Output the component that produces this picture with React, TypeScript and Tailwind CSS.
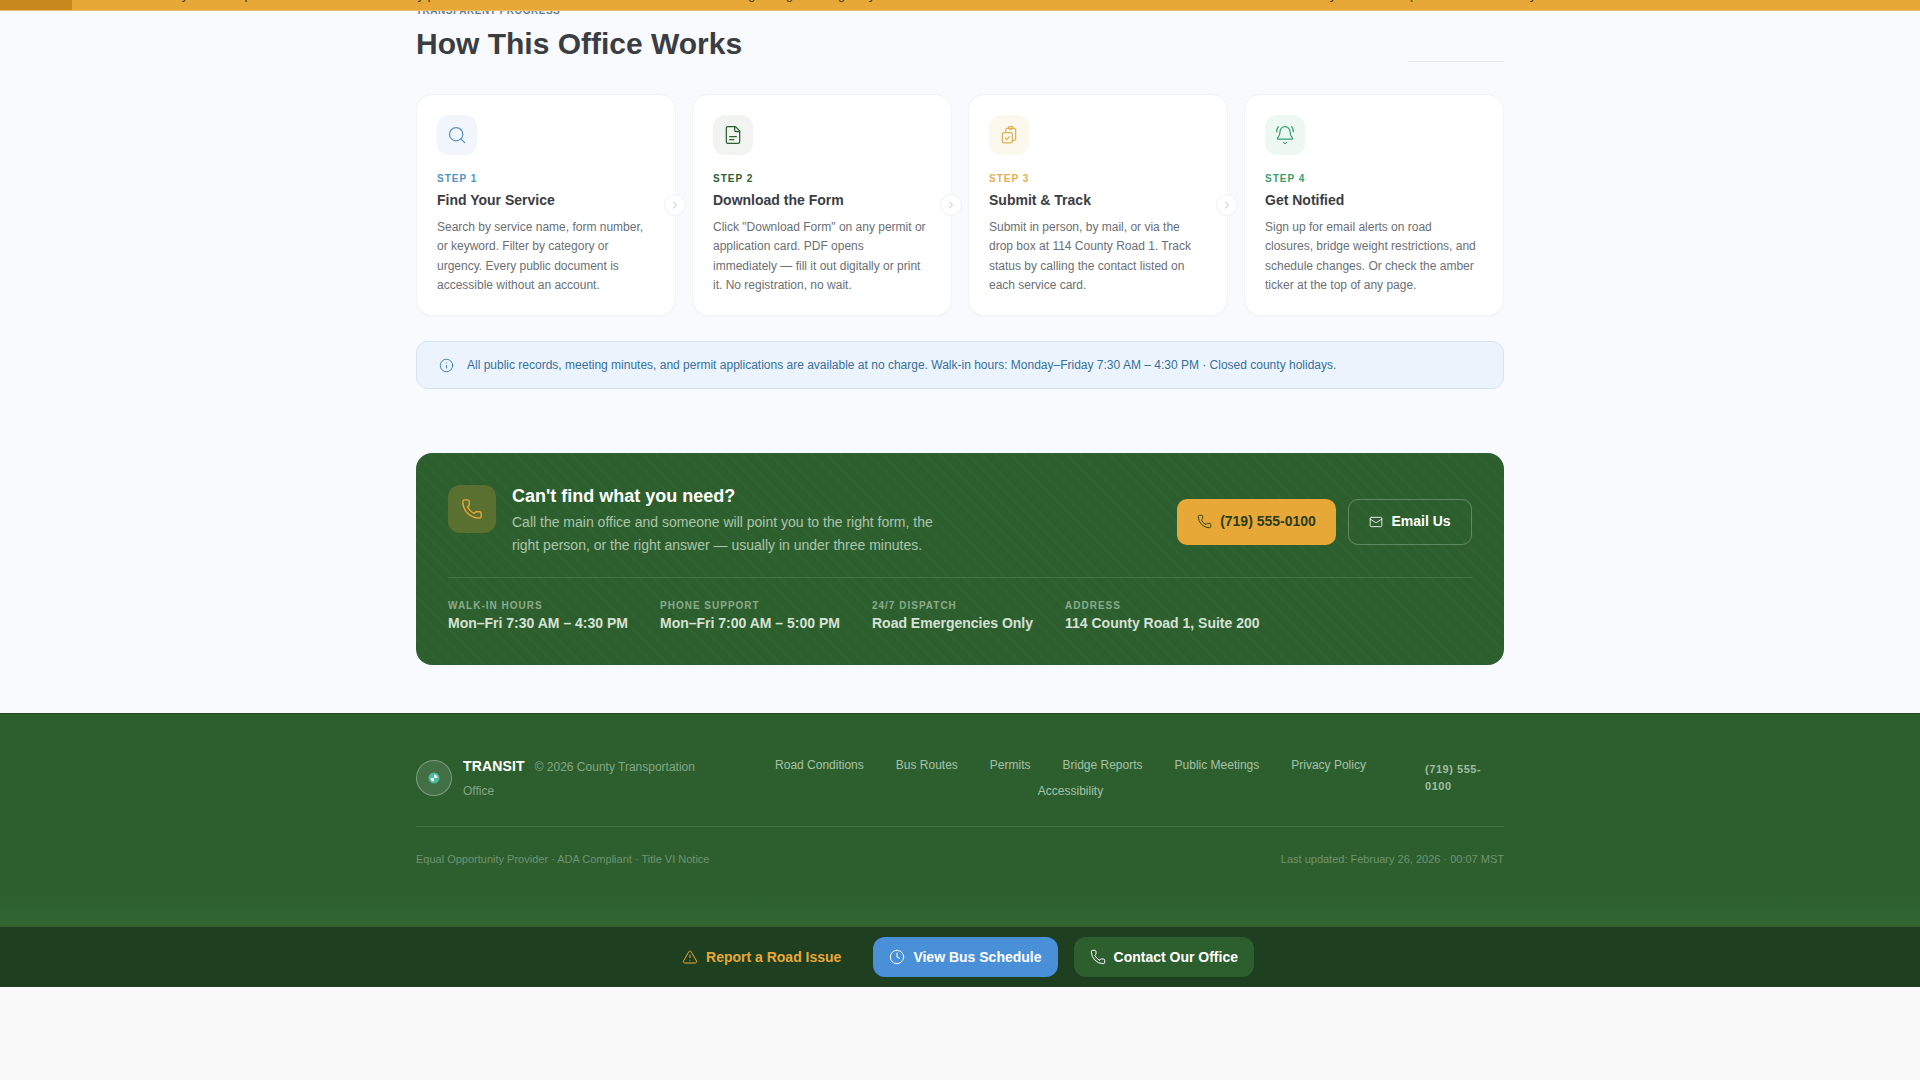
import { Search, BellRing, ChevronRight, Info, Phone, Mail, TriangleAlert, Clock } from "lucide-react";
import type { SVGProps } from "react";

type IconProps = SVGProps<SVGSVGElement> & { size?: number; strokeWidth?: number };

function Clipboards(props: IconProps) {
  const { size = 20, strokeWidth = 1.5, ...rest } = props;
  return (
    <svg width={size} height={size} viewBox="0 0 24 24" fill="none" stroke="currentColor" strokeWidth={strokeWidth} strokeLinecap="round" strokeLinejoin="round" {...rest}>
      <rect x="4" y="9" width="12" height="12.5" rx="2" />
      <path d="M8 9V6a2 2 0 0 1 2-2h8a2 2 0 0 1 2 2v10.5a2 2 0 0 1-2 2h-2" />
      <rect x="11.5" y="2" width="5" height="3" rx="1" />
      <path d="M7.5 15.5l2 2 3-3.5" />
    </svg>
  );
}

function DocLines(props: IconProps) {
  const { size = 20, strokeWidth = 1.5, ...rest } = props;
  return (
    <svg width={size} height={size} viewBox="0 0 24 24" fill="none" stroke="currentColor" strokeWidth={strokeWidth} strokeLinecap="round" strokeLinejoin="round" {...rest}>
      <path d="M15 2H6a2 2 0 0 0-2 2v16a2 2 0 0 0 2 2h12a2 2 0 0 0 2-2V7z" />
      <path d="M14 2v4a2 2 0 0 0 2 2h4" />
      <path d="M8 14h8" />
      <path d="M8 17.5h5" />
    </svg>
  );
}

const steps = [
  { n: "STEP 1", t: "Find Your Service", d: "Search by service name, form number, or keyword. Filter by category or urgency. Every public document is accessible without an account.", Icon: Search, box: "bg-[#f0f6fc]", ic: "text-[#5b93c7]", st: "text-[#4f94c4]" },
  { n: "STEP 2", t: "Download the Form", d: "Click \"Download Form\" on any permit or application card. PDF opens immediately — fill it out digitally or print it. No registration, no wait.", Icon: DocLines, box: "bg-[#f1f4f1]", ic: "text-[#2d5f2e]", st: "text-[#2d5f2e]" },
  { n: "STEP 3", t: "Submit & Track", d: "Submit in person, by mail, or via the drop box at 114 County Road 1. Track status by calling the contact listed on each service card.", Icon: Clipboards, box: "bg-[#fdf8ee]", ic: "text-[#e3b057]", st: "text-[#e0b04f]" },
  { n: "STEP 4", t: "Get Notified", d: "Sign up for email alerts on road closures, bridge weight restrictions, and schedule changes. Or check the amber ticker at the top of any page.", Icon: BellRing, box: "bg-[#edf8f2]", ic: "text-[#38a070]", st: "text-[#38a070]" },
];

const stats = [
  ["WALK-IN HOURS", "Mon–Fri 7:30 AM – 4:30 PM"],
  ["PHONE SUPPORT", "Mon–Fri 7:00 AM – 5:00 PM"],
  ["24/7 DISPATCH", "Road Emergencies Only"],
  ["ADDRESS", "114 County Road 1, Suite 200"],
];

const links = ["Road Conditions", "Bus Routes", "Permits", "Bridge Reports", "Public Meetings", "Privacy Policy", "Accessibility"];

export default function App() {
  return (
    <div className="h-[1080px] overflow-hidden bg-[#f8fafd] font-['Liberation_Sans',Arial,sans-serif] flex flex-col">
      <div className="relative z-20 h-[11px] shrink-0 bg-[#e8a838] border-b border-[#edbd68] overflow-hidden">
        <div className="absolute left-0 top-0 h-full w-[72px] bg-[#c8881e]" />
        <div className="absolute inset-x-0 -top-[11px] text-[13px] leading-[12px] font-medium text-[#2d3a1a] whitespace-nowrap">
          <span className="absolute left-[147px]">County Road 14 paved</span>
          <span className="absolute left-[395px]">Daily permit</span>
          <span className="absolute left-[725px]">Bridge weight on Highway</span>
          <span className="absolute left-[1295px]">County</span>
          <span className="absolute left-[1410px]">permits</span>
          <span className="absolute left-[1495px]">County</span>
        </div>
      </div>

      <main className="w-[1088px] mx-auto shrink-0">
        <div className="flex items-end justify-between">
          <div>
            <div className="-mt-[7px] text-[10px] leading-[14px] font-bold tracking-[0.05em] text-[#6b7c8c]">TRANSPARENT PROGRESS</div>
            <h2 className="text-[30px] leading-[36px] font-bold text-[#3a3d42] mt-[8px]">How This Office Works</h2>
          </div>
          <div className="w-24 h-px bg-[#e2e8f0]" />
        </div>

        <div className="mt-8 grid grid-cols-4 gap-4">
          {steps.map((s, i) => (
            <div key={s.n} className="relative h-[222px] bg-white rounded-[16px] border border-[#f1f3f6] px-5 pt-5 shadow-[0_1px_3px_rgba(0,0,0,0.02)]">
              <div className={`w-10 h-10 rounded-[12px] flex items-center justify-center ${s.box}`}>
                <s.Icon size={20} strokeWidth={1.5} className={s.ic} />
              </div>
              <div className={`mt-[17px] text-[10px] leading-[14px] font-bold tracking-[0.1em] ${s.st}`}>{s.n}</div>
              <div className="mt-1 text-[14px] leading-[20px] font-bold text-[#3a3d42]">{s.t}</div>
              <p className="mt-2 text-[12px] leading-[19.4px] text-[#6b6f76]">{s.d}</p>
              {i < 3 && (
                <div className="absolute z-10 top-1/2 -translate-y-1/2 -right-[11px] w-[22px] h-[22px] rounded-full bg-white border border-[#eef0f3] flex items-center justify-center">
                  <ChevronRight size={12} strokeWidth={1.5} className="text-[#a0a7b2]" />
                </div>
              )}
            </div>
          ))}
        </div>

        <div className="mt-[25px] h-12 rounded-[12px] bg-[#ebf4fd] border border-[#d3e4f4] flex items-center pl-[22px] gap-[13px]">
          <Info size={15} strokeWidth={1.5} className="text-[#3b78ae] shrink-0" />
          <span className="text-[12px] text-[#366f9f]">All public records, meeting minutes, and permit applications are available at no charge. Walk-in hours: Monday–Friday 7:30 AM – 4:30 PM · Closed county holidays.</span>
        </div>

        <section className="mt-16 h-[212px] rounded-[16px] bg-[#2d5f2e] bg-[repeating-linear-gradient(45deg,transparent,transparent_8px,rgba(255,255,255,0.015)_8px,rgba(255,255,255,0.015)_10px)] px-8 pt-8">
          <div className="flex items-center justify-between">
            <div className="flex items-start gap-4">
              <div className="w-12 h-12 rounded-[12px] bg-[#5a7030] flex items-center justify-center">
                <Phone size={22} strokeWidth={1.5} className="text-[#e8a838]" />
              </div>
              <div>
                <div className="text-[18px] leading-[22px] font-bold text-white">Can't find what you need?</div>
                <p className="mt-1 w-[440px] text-[14px] leading-[22.6px] text-[#acc5ac]">Call the main office and someone will point you to the right form, the right person, or the right answer — usually in under three minutes.</p>
              </div>
            </div>
            <div className="flex items-center gap-3 mt-[2px]">
              <button className="h-[46px] w-[159px] rounded-[10px] bg-[#e8a838] flex items-center justify-center gap-2 text-[14px] font-bold text-[#2a3d1a]">
                <Phone size={15} strokeWidth={1.5} />(719) 555-0100
              </button>
              <button className="h-[46px] w-[124px] rounded-[10px] border border-white/25 flex items-center justify-center gap-2 text-[14px] font-bold text-white">
                <Mail size={14} strokeWidth={1.5} />Email Us
              </button>
            </div>
          </div>
          <div className="mt-[21px] pt-5 border-t border-white/10 flex gap-8">
            {stats.map(([l, v]) => (
              <div key={l}>
                <div className="text-[10px] leading-[15px] font-bold tracking-[0.1em] text-[#8aab8b]">{l}</div>
                <div className="text-[14px] leading-[20px] font-bold text-[#d5e2d5]">{v}</div>
              </div>
            ))}
          </div>
        </section>
      </main>

      <footer className="mt-12 h-[212px] shrink-0 border-t border-[#234a24] bg-[linear-gradient(to_bottom,#2d5f2e_85%,#306632_100%)]">
        <div className="w-[1088px] mx-auto pt-10">
          <div className="flex items-center gap-4 border-b border-white/10 pb-6">
            <div className="w-[300px] shrink-0 flex items-center gap-[11px]">
              <div className="w-9 h-9 shrink-0 rounded-full border border-white/30 bg-white/10 flex items-center justify-center">
                <svg width="12" height="12" viewBox="0 0 12 12">
                  <circle cx="6" cy="6" r="5.5" fill="#4fb89a" />
                  <path d="M6 2.5a3.5 3.5 0 0 1 3.5 3.5H6z" fill="#e6f7f2" />
                  <path d="M2.5 6H6v3.5A3.5 3.5 0 0 1 2.5 6z" fill="#e6f7f2" />
                </svg>
              </div>
              <div className="leading-[22.5px] mt-px">
                <span className="text-[14px] font-bold text-white tracking-[0.01em] mr-[10px]">TRANSIT</span>
                <span className="text-[12px] text-[#83a684]">© 2026 County Transportation Office</span>
              </div>
            </div>
            <nav className="flex-1 flex flex-wrap justify-center gap-x-8 gap-y-2">
              {links.map((l) => (
                <a key={l} className="text-[12px] leading-[18px] text-[#a6c1a7]">{l}</a>
              ))}
            </nav>
            <div className="w-[79px] shrink-0 text-[11px] leading-[17px] font-bold tracking-[0.05em] text-[#a0bca1]">(719) 555-0100</div>
          </div>
          <div className="mt-6 flex justify-between text-[11px] leading-[16px] text-[#6f9370]">
            <span>Equal Opportunity Provider · ADA Compliant · Title VI Notice</span>
            <span>Last updated: February 26, 2026 · 00:07 MST</span>
          </div>
        </div>
      </footer>

      <div className="h-[62px] shrink-0 bg-[#1e3f20] border-t-2 border-[#39602c] flex items-center justify-center gap-4">
        <button className="h-10 px-4 rounded-[12px] flex items-center gap-2 text-[14px] font-bold text-[#e8a838]">
          <TriangleAlert size={16} strokeWidth={1.5} />Report a Road Issue
        </button>
        <button className="h-10 px-4 rounded-[12px] bg-[#4a90d9] flex items-center gap-2 text-[14px] font-bold text-white">
          <Clock size={16} strokeWidth={1.5} />View Bus Schedule
        </button>
        <button className="h-10 px-4 rounded-[12px] bg-[#2d5f2e] flex items-center gap-2 text-[14px] font-bold text-white">
          <Phone size={16} strokeWidth={1.5} />Contact Our Office
        </button>
      </div>
      <div className="h-[3px] shrink-0 bg-white" />
      <div className="flex-1 bg-[#f9f9f9]" />
    </div>
  );
}
